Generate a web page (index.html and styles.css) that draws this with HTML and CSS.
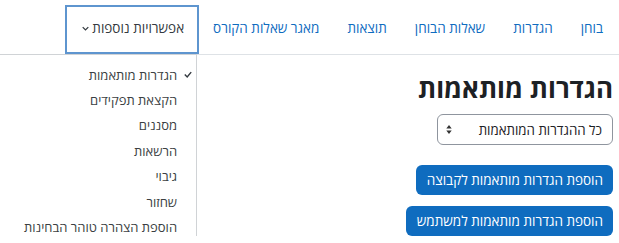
FILE: index.html
```html
<!DOCTYPE html>
<html lang="he" dir="rtl">
<head>
<meta charset="utf-8">
<title>הגדרות מותאמות</title>
<link rel="stylesheet" href="styles.css">
</head>
<body>
<nav class="secnav">
  <ul class="navlist">
    <li><a class="navlink" href="#">בוחן</a></li>
    <li><a class="navlink" href="#">הגדרות</a></li>
    <li><a class="navlink" href="#">שאלות הבוחן</a></li>
    <li><a class="navlink" href="#">תוצאות</a></li>
    <li><a class="navlink" href="#">מאגר שאלות הקורס</a></li>
    <li class="more">
      <a class="navlink morebtn" href="#">אפשרויות נוספות
        <svg class="chev" viewBox="0 0 10 6" width="7" height="5"><path d="M1 1l4 4 4-4" fill="none" stroke="currentColor" stroke-width="1.8"/></svg>
      </a>
      <ul class="menu">
        <li><a class="mitem active" href="#"><svg class="check" viewBox="0 0 10 8" width="8" height="7"><path d="M1 4l3 3 5-6" fill="none" stroke="currentColor" stroke-width="1.8"/></svg>הגדרות מותאמות</a></li>
        <li><a class="mitem" href="#">הקצאת תפקידים</a></li>
        <li><a class="mitem" href="#">מסננים</a></li>
        <li><a class="mitem" href="#">הרשאות</a></li>
        <li><a class="mitem" href="#">גיבוי</a></li>
        <li><a class="mitem" href="#">שחזור</a></li>
        <li><a class="mitem" href="#">הוספת הצהרה טוהר הבחינות</a></li>
      </ul>
    </li>
  </ul>
</nav>
<main class="content">
  <h2 class="title">הגדרות מותאמות</h2>
  <div class="selectbox">
    <span class="seltext">כל ההגדרות המותאמות</span>
    <svg class="updown" viewBox="0 0 6 10" width="6" height="9"><path d="M3 0l3 4H0zM3 10l3-4H0z" fill="#333"/></svg>
  </div>
  <div class="buttons">
    <a class="btn" href="#">הוספת הגדרות מותאמות לקבוצה</a>
    <a class="btn" href="#">הוספת הגדרות מותאמות למשתמש</a>
  </div>
</main>
</body>
</html>
```
FILE: styles.css
```css
* { box-sizing: border-box; }
body {
  margin: 0;
  direction: rtl;
  font-family: "Open Sans", "Liberation Sans", "DejaVu Sans", sans-serif;
  font-size: 13.5px;
  color: #1d2125;
  background: #fff;
  overflow: hidden;
}
a { text-decoration: none; }
ul { list-style: none; margin: 0; padding: 0; }
.secnav {
  height: 55px;
  border-bottom: 1px solid #dee2e6;
  padding-right: 2px;
}
.navlist {
  display: flex;
  align-items: stretch;
  height: 54px;
  padding-top: 5px;
}
.navlist > li { display: flex; }
.navlink {
  display: flex;
  align-items: center;
  padding: 0 12px 3px;
  color: #0f6cbf;
  white-space: nowrap;
  border: 2px solid transparent;
}
.more { position: relative; }
.morebtn {
  border-color: #5e95cf;
  padding: 0 13px 3px 15px;
  color: #343a40;
  gap: 3px;
}
.chev { color: #343a40; margin-top: 1px; }
.menu {
  position: absolute;
  top: 49px;
  right: 2px;
  border: 1px solid #d0d3d6;
  background: #fff;
  padding: 7px 0;
  white-space: nowrap;
}
.mitem {
  display: flex;
  align-items: center;
  position: relative;
  height: 25.4px;
  padding: 0 19px 0 24px;
  color: #3b3f43;
  font-size: 13px;
}
.check {
  position: absolute;
  right: 4px;
  top: 9px;
  color: #343a40;
}
.content {
  padding: 17px 6px 0 0;
  display: flex;
  flex-direction: column;
  align-items: flex-start;
}
.title {
  margin: 0 0 10px;
  font-size: 26px;
  line-height: 32px;
  font-weight: 700;
}
.selectbox {
  width: 176px;
  height: 31px;
  border: 1px solid #8f959e;
  border-radius: 6px;
  display: flex;
  align-items: center;
  justify-content: space-between;
  padding: 0 10px 0 8px;
  font-size: 13.3px;
  color: #1d2125;
}
.buttons {
  margin-top: 20px;
  display: flex;
  flex-direction: column;
  align-items: flex-start;
  gap: 11px;
}
.btn {
  display: flex;
  align-items: center;
  height: 30px;
  padding: 0 10px 0 11px;
  background: #0f6cbf;
  color: #fff;
  border-radius: 6px;
  font-size: 13.5px;
}
```
